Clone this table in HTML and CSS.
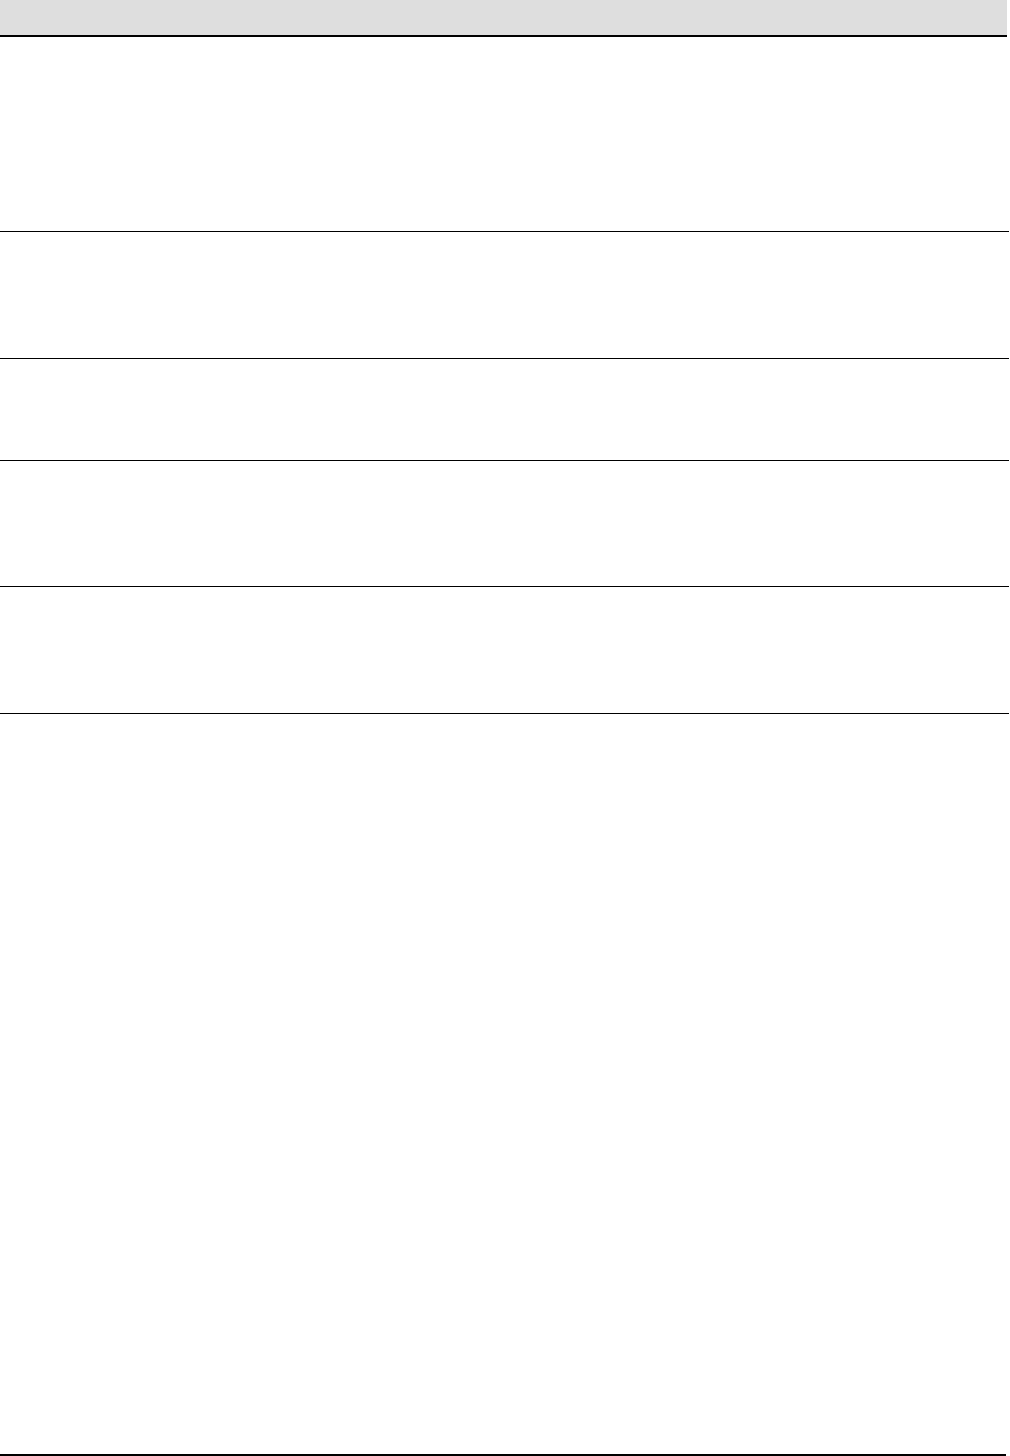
FILE: index.html
```html
<!DOCTYPE html>
<html>
<head>
    <title>Sheet</title>
    <link rel="stylesheet" href="styles.css">
</head>
<body>
    <div class="sheet">
        <div class="sheet_head"></div>
        <div class="row row-1"></div>
        <div class="row row-2"></div>
        <div class="row row-3"></div>
        <div class="row row-4"></div>
        <div class="row row-5"></div>
        <div class="sheet_rest"></div>
        <div class="sheet_foot"></div>
    </div>
</body>
</html>
```

FILE: styles.css
```css
html, body {
    margin: 0;
    padding: 0;
    background: #ffffff;
}

body {
    font-family: 'Liberation Sans', Arial, sans-serif;
}

.sheet {
    display: flex;
    flex-direction: column;
    width: 1010px;
    height: 1456px;
}

.sheet_head {
    width: 1007px;
    height: 35px;
    background: #dedede;
    border-bottom: 2px solid #000000;
    flex: none;
}

.row {
    width: 1009px;
    border-bottom: 1px solid #000000;
    flex: none;
}

.row-1 { height: 194px; }
.row-2 { height: 126px; }
.row-3 { height: 101px; }
.row-4 { height: 125px; }
.row-5 { height: 126px; }

.sheet_rest {  flex: 1;  }

.sheet_foot {
    width: 1006px;
    height: 2px;
    background: #000000;
    flex: none;
}
```
